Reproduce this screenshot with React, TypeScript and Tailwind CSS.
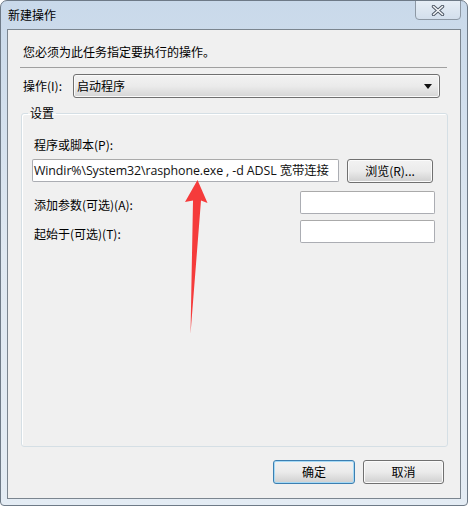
import React from "react";

const ui = { fontFamily: '"Noto Sans CJK SC", "Noto Sans", sans-serif' };
const latin = { fontFamily: '"Open Sans", "Noto Sans CJK SC", sans-serif' };

function TextBox({ className, children }: { className: string; children?: React.ReactNode }) {
  return (
    <div
      className={`h-[23px] bg-white border border-[#abadb3] border-t-[#aaaaaa] rounded-[2px] overflow-hidden ${className}`}
    >
      {children}
    </div>
  );
}

function Button({ label, focused, className }: { label: string; focused?: boolean; className: string }) {
  return (
    <div
      className={`h-[24px] flex items-center justify-center rounded-[3px] border text-[12px] text-black bg-gradient-to-b from-[#f2f2f2] via-[#ebebeb] to-[#cfcfcf] ${
        focused ? "border-[#3c7fb1] shadow-[inset_0_0_0_1px_#a5d9f5]" : "border-[#707070] shadow-[inset_0_0_0_1px_#fbfbfb]"
      } ${className}`}
      style={ui}
    >
      {label}
    </div>
  );
}

export default function App() {
  return (
    <div className="w-[468px] h-[506px] bg-white">
      <div className="relative w-[468px] h-[506px] flex flex-col border border-[#6e7a87] rounded-t-[7px] rounded-b-[4px] bg-gradient-to-b from-[#c9d9ea] via-[#dfe8f1] to-[#e4ecf4] overflow-hidden">
        {/* title bar */}
        <div className="h-[28px] flex items-start shrink-0">
          <span className="ml-[7px] mt-[6px] text-[12px] leading-[16px] text-black" style={ui}>
            新建操作
          </span>
          <div className="ml-auto mr-[6px] mt-[-1px] w-[46px] h-[20px] rounded-b-[4px] border border-[#8d98a4] bg-gradient-to-b from-[#e6eef6] to-[#d3dfec] flex items-center justify-center">
            <svg width="14" height="11" viewBox="0 0 14 11">
              <path d="M2.5 1.5 L11.5 9.5 M11.5 1.5 L2.5 9.5" stroke="#4b5563" strokeWidth="3.4" strokeLinecap="round" />
              <path d="M2.5 1.5 L11.5 9.5 M11.5 1.5 L2.5 9.5" stroke="#f4f6f8" strokeWidth="1.6" strokeLinecap="round" />
            </svg>
          </div>
        </div>

        {/* client panel */}
        <div className="mx-[6px] mb-[6px] flex-1 border border-[#7b858f] bg-[#f0f0f0] flex flex-col text-[12px] text-black" style={ui}>
          <p className="mt-[14px] ml-[15px] leading-[16px]">您必须为此任务指定要执行的操作。</p>
          <div className="mt-[7px] ml-[12px] mr-[13px] h-[2px] border-t border-[#a0a0a0] border-b-white" />

          <div className="mt-[5px] flex items-center h-[24px]">
            <span className="ml-[15px] w-[50px] leading-[16px]">操作(I):</span>
            <div className="w-[367px] h-[24px] flex items-center rounded-[3px] border border-[#707070] bg-gradient-to-b from-[#f2f2f2] via-[#ebebeb] to-[#d5d5d5] shadow-[inset_0_0_0_1px_#fafafa]">
              <span className="ml-[3px] leading-[16px]">启动程序</span>
              <svg className="ml-auto mr-[7px]" width="8" height="5" viewBox="0 0 8 5">
                <path d="M0 0 H8 L4 5 Z" fill="#111" />
              </svg>
            </div>
          </div>

          <fieldset className="mt-[7px] ml-[13px] w-[427px] h-[342px] border border-[#d5dfe5] rounded-[3px] shadow-[inset_1px_1px_0_#fff]">
            <legend className="ml-[6px] px-[2px] leading-[16px]">设置</legend>
            <div className="pl-[12px] mt-[16px] leading-[16px]">程序或脚本(P):</div>
            <div className="mt-[6px] ml-[10px] flex items-start">
              <TextBox className="w-[307px] flex items-center">
                <span className="ml-[1px] whitespace-nowrap text-[12.4px] tracking-[-0.1px] leading-[16px] text-[#111]" style={latin}>
                  Windir%\System32\rasphone.exe , -d ADSL 宽带连接
                </span>
              </TextBox>
              <Button label="浏览(R)..." className="ml-[8px] w-[86px]" />
            </div>
            <div className="mt-[8px] flex items-center">
              <span className="pl-[12px] w-[278px] leading-[16px] pt-[4px]">添加参数(可选)(A):</span>
              <TextBox className="w-[135px]" />
            </div>
            <div className="mt-[6px] flex items-center">
              <span className="pl-[12px] w-[278px] leading-[16px] pt-[4px]">起始于(可选)(T):</span>
              <TextBox className="w-[135px]" />
            </div>
          </fieldset>

          <div className="mt-[13px] flex justify-end gap-[8px] pr-[16px]">
            <Button label="确定" focused className="w-[82px]" />
            <Button label="取消" className="w-[81px]" />
          </div>
        </div>

        {/* annotation arrow */}
        <svg className="absolute left-0 top-0 pointer-events-none" width="468" height="506">
          <polygon
            points="196.5,179 206.5,202 200,199.5 189.5,333 192,199.5 184,201"
            fill="#f53b3b"
          />
        </svg>
      </div>
    </div>
  );
}
